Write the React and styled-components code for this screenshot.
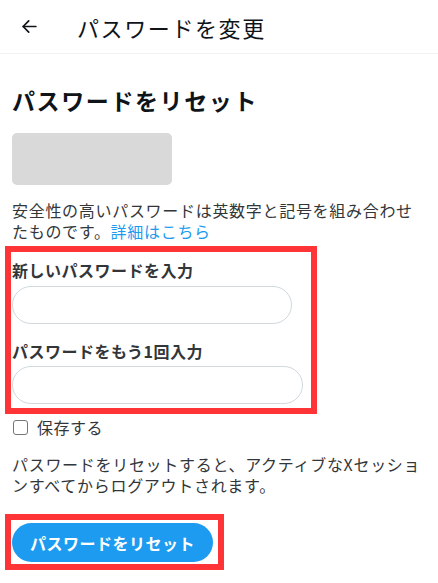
import styled, { createGlobalStyle } from 'styled-components';

const GlobalStyle = createGlobalStyle`
	html, body {
		margin: 0;
		padding: 0;
		background: #ffffff;
	}
	body {
		font-family: 'Noto Sans CJK JP', 'Noto Sans', sans-serif;
		color: #0f1419;
	}
`;

const Page = styled.div`
	width: 438px;
	min-height: 583px;
	background: #ffffff;
`;

const Header = styled.header`
	display: flex;
	align-items: center;
	height: 53px;
	padding-left: 19px;
	border-bottom: 1px solid #eff3f4;
`;

const BackButton = styled.button`
	display: flex;
	align-items: center;
	justify-content: center;
	width: 20px;
	height: 20px;
	padding: 0;
	margin-right: 38px;
	border: none;
	background: none;
	color: #0f1419;
`;

const HeaderTitle = styled.h1`
	margin: 0;
	font-size: 22px;
	font-weight: 400;
	letter-spacing: 1.6px;
	line-height: 30px;
`;

const Main = styled.main`
	padding: 0 12px;
`;

const Title = styled.h2`
	margin: 31px 0 0;
	font-size: 23px;
	font-weight: 700;
	letter-spacing: 1.6px;
	line-height: 30px;
`;

const Placeholder = styled.div`
	width: 160px;
	height: 52px;
	margin-top: 18px;
	border-radius: 5px;
	background: #d9d9d9;
`;

const Note = styled.p`
	margin: ${p => p.$top}px 0 0;
	font-size: 16px;
	letter-spacing: 0.7px;
	line-height: 21px;
	color: #333639;
`;

const Link = styled.a`
	color: #1d9bf0;
	text-decoration: none;
`;

const Highlight = styled.div`
	box-sizing: border-box;
	width: ${p => p.$width};
	margin: ${p => p.$top}px 0 0 -7px;
	padding: ${p => p.$pad};
	border: 6px solid #fe3437;
`;

const Label = styled.label`
	display: block;
	margin-top: ${p => p.$top || 0}px;
	font-size: 16px;
	font-weight: 700;
	letter-spacing: 0.5px;
	line-height: 22px;
	color: #333639;
`;

const Input = styled.input`
	display: block;
	box-sizing: border-box;
	width: ${p => p.$width}px;
	height: 38px;
	margin-top: ${p => p.$top}px;
	padding: 0 16px;
	border: 1px solid #cfd9de;
	border-radius: 999px;
	background: #ffffff;
	font: inherit;
	outline: none;
`;

const CheckRow = styled.label`
	display: flex;
	align-items: center;
	gap: 9px;
	margin-top: 3px;
	padding-left: 1px;
	height: 20px;
	font-size: 16px;
	letter-spacing: 0.5px;
	color: #333639;
`;

const Box = styled.span`
	box-sizing: border-box;
	width: 15px;
	height: 15px;
	border: 1.5px solid #767676;
	border-radius: 3px;
	background: #ffffff;
`;

const PrimaryButton = styled.button`
	display: block;
	width: 201px;
	height: 39px;
	border: none;
	border-radius: 999px;
	background: #1d9bf0;
	color: #ffffff;
	font-family: inherit;
	font-size: 16px;
	font-weight: 700;
	letter-spacing: 0.5px;
`;

function ArrowLeft() {
	return (
		<svg width="19" height="19" viewBox="0 0 24 24" fill="none" stroke="currentColor" strokeWidth="2.2" strokeLinecap="round" strokeLinejoin="round">
			<path d="M20 12H4" />
			<path d="M11 5l-7 7 7 7" />
		</svg>
	);
}

export default function App() {
	return (
		<>
			<GlobalStyle />
			<Page>
				<Header>
					<BackButton aria-label="戻る">
						<ArrowLeft />
					</BackButton>
					<HeaderTitle>パスワードを変更</HeaderTitle>
				</Header>
				<Main>
					<Title>パスワードをリセット</Title>
					<Placeholder />
					<Note $top={15}>
						安全性の高いパスワードは英数字と記号を組み合わせたものです。<Link href="#">詳細はこちら</Link>
					</Note>
					<Highlight $width="312px" $top={4} $pad="7px 0 4px 1px">
						<Label htmlFor="new-pass">新しいパスワードを入力</Label>
						<Input id="new-pass" type="password" $width={280} $top={5} />
						<Label htmlFor="confirm-pass" $top={16}>パスワードをもう1回入力</Label>
						<Input id="confirm-pass" type="password" $width={291} $top={4} />
					</Highlight>
					<CheckRow>
						<Box />
						保存する
					</CheckRow>
					<Note $top={17}>
						パスワードをリセットすると、アクティブなXセッションすべてからログアウトされます。
					</Note>
					<Highlight $width="219px" $top={18} $pad="3px 5px 2px 1px">
						<PrimaryButton>パスワードをリセット</PrimaryButton>
					</Highlight>
				</Main>
			</Page>
		</>
	);
}
